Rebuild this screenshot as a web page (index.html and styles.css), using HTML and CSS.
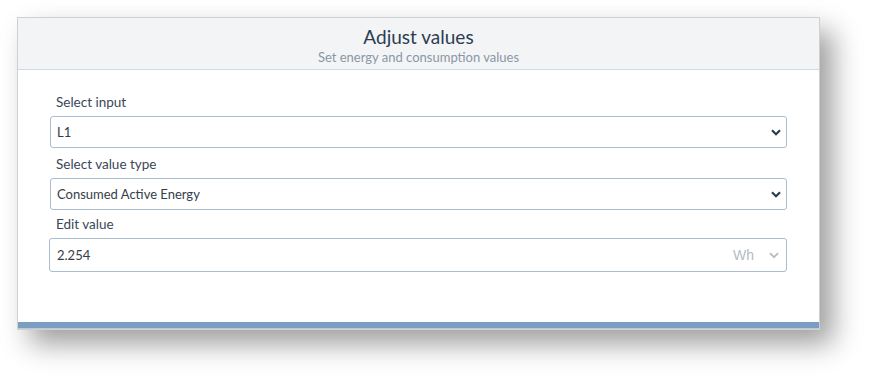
FILE: index.html
```html
<!DOCTYPE html>
<html lang="en">
<head>
  <meta charset="UTF-8">
  <meta name="viewport" content="width=device-width, initial-scale=1.0">
  <title>Adjust values</title>
  <link rel="stylesheet" href="styles.css">
</head>
<body>
<div class="dialog">
  <header class="dialog-head">
    <h1>Adjust values</h1>
    <p>Set energy and consumption values</p>
  </header>

  <form class="dialog-body">
    <label class="field-label" for="input">Select input</label>
    <div class="select-wrap">
      <select id="input">
        <option>L1</option>
        <option>L2</option>
        <option>L3</option>
      </select>
      <svg class="chevron" width="10" height="7" viewBox="0 0 10 7"><path d="M1 1.2 L5 5.2 L9 1.2" fill="none" stroke="#2c3d52" stroke-width="2.2"/></svg>
    </div>

    <label class="field-label" for="type">Select value type</label>
    <div class="select-wrap last">
      <select id="type">
        <option>Consumed Active Energy</option>
        <option>Produced Active Energy</option>
      </select>
      <svg class="chevron" width="10" height="7" viewBox="0 0 10 7"><path d="M1 1.2 L5 5.2 L9 1.2" fill="none" stroke="#2c3d52" stroke-width="2.2"/></svg>
    </div>

    <label class="field-label" for="value">Edit value</label>
    <div class="value-group">
      <input id="value" type="text" value="2.254">
      <span class="unit">Wh</span>
      <svg class="unit-chevron" width="10" height="7" viewBox="0 0 10 7"><path d="M1 1.2 L5 5.2 L9 1.2" fill="none" stroke="#b4bcc6" stroke-width="1.8"/></svg>
    </div>
  </form>

  <div class="dialog-foot"></div>
</div>
</body>
</html>
```

FILE: styles.css
```css
html, body {
  height: 100%;
}

body {
  background-color: #ffffff;
  font-family: Lato, "Open Sans", sans-serif;
  margin: 0;
  padding: 17px 0 0 17px;
  box-sizing: border-box;
  min-height: 378px;
}

.dialog {
  width: 801px;
  background-color: #ffffff;
  border: 1px solid #cdd1d6;
  box-shadow: 13px 14px 26px rgba(0, 0, 0, 0.38);
}

.dialog-head {
  background-color: #f3f4f6;
  border-bottom: 1px solid #d3d8de;
  height: 52px;
  box-sizing: border-box;
  text-align: center;
  padding-top: 7px;
}

.dialog-head h1 {
  margin: 0;
  font-size: 19px;
  font-weight: 400;
  line-height: 24px;
  color: #2c3d52;
}

.dialog-head p {
  margin: 0;
  font-size: 13px;
  line-height: 16px;
  color: #8a97a5;
}

.dialog-body {
  padding: 24px 32px 50px 32px;
}

.field-label {
  display: block;
  font-size: 13.5px;
  line-height: 16px;
  color: #3a4756;
  padding-left: 6px;
  margin-bottom: 6px;
}

.select-wrap {
  position: relative;
  margin-bottom: 8px;
}

.select-wrap.last {
  margin-bottom: 6px;
}

.select-wrap select {
  -webkit-appearance: none;
  appearance: none;
  width: 100%;
  height: 32px;
  border: 1px solid #a9bdd3;
  border-radius: 3px;
  background-color: #ffffff;
  font-family: inherit;
  font-size: 13px;
  color: #333e4a;
  padding: 0 6px;
}

.chevron {
  position: absolute;
  right: 6px;
  top: 13px;
}

.value-group {
  display: flex;
  align-items: center;
  height: 34px;
  margin-left: -1px;
  border: 1px solid #a9bdd3;
  border-radius: 3px;
  box-sizing: border-box;
}

.value-group input {
  flex: 1;
  border: none;
  outline: none;
  font-family: inherit;
  font-size: 13px;
  color: #333e4a;
  padding: 0 7px;
  height: 100%;
  background: transparent;
}

.unit {
  font-family: "Liberation Sans", Arial, sans-serif;
  font-size: 14px;
  color: #b4bcc6;
  margin-right: 15px;
}

.unit-chevron {
  margin-right: 7px;
}

.dialog-foot {
  height: 6px;
  background-color: #7b9dc2;
  border-bottom: 1px solid #c4c8cc;
}
```
